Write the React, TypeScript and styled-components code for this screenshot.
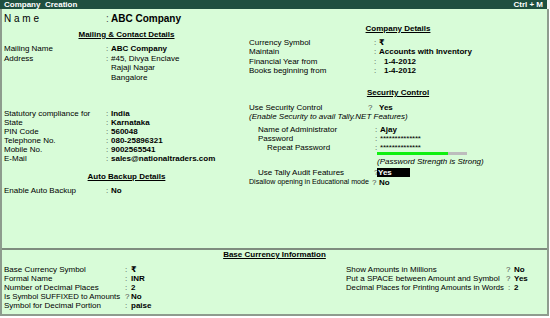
import React from "react";
import styled, {createGlobalStyle} from "styled-components";

const FONT = `"Liberation Sans", Arial, "DejaVu Sans", "Noto Sans", sans-serif`

const GlobalStyle = createGlobalStyle`
  html, body {
    margin: 0;
    padding: 0;
    background: #fff;
  }
  body {
    font-family: ${FONT};
    font-size: 8px;
    color: #000;
  }
`

const Screen = styled.div`
  width: 550px;
  height: 318px;
  overflow: hidden;
  background: #fff;
  display: flex;
  flex-direction: column;
`

const TitleBar = styled.div`
  height: 9px;
  background: #1f5040;
  color: #fff;
  font-weight: bold;
  font-size: 8px;
  line-height: 9px;
  display: flex;
  align-items: center;
  padding-left: 4px;
`

const TitleText = styled.div`
  flex: 1;
  white-space: pre;
`

const Shortcut = styled.div`
  padding-right: 4px;
`

const CornerBox = styled.div`
  width: 3px;
  height: 9px;
  background: #f4f4f4;
`

const Frame = styled.div`
  width: 545px;
  height: 305px;
  background: #d8fcd8;
  border: 2px solid #8e9c8e;
  border-top: none;
  display: flex;
  flex-direction: column;
`

const TopArea = styled.div`
  height: 239px;
  display: grid;
  grid-template-columns: 247px 1fr;
`

const Column = styled.div<{ $pad?: number }>`
  display: flex;
  flex-direction: column;
  padding-left: ${p => p.$pad ?? 0}px;
`

const Block = styled.div<{ $mt?: number; $lh?: number; $indent?: number }>`
  margin-top: ${p => p.$mt ?? 0}px;
  line-height: ${p => p.$lh ?? 9}px;
  padding-left: ${p => p.$indent ?? 0}px;
  white-space: nowrap;
`

const Heading = styled.div<{ $mt?: number }>`
  margin-top: ${p => p.$mt ?? 0}px;
  text-align: center;
  font-weight: bold;
  line-height: 9px;
  white-space: nowrap;

  span {
    text-decoration: underline;
    text-underline-offset: 1px;
  }
`

const Field = styled.div<{ $label: number; $sep: number; $indent?: number; $mt?: number }>`
  display: grid;
  grid-template-columns: ${p => p.$label}px ${p => p.$sep}px auto;
  padding-left: ${p => p.$indent ?? 0}px;
  margin-top: ${p => p.$mt ?? 0}px;
  white-space: nowrap;
`

const Label = styled.div<{ $size?: number }>`
  font-size: ${p => p.$size ?? 8}px;
`

const Sep = styled.div<{ $pad?: number }>`
  color: #4a4a4a;
  padding-left: ${p => p.$pad ?? 0}px;
`

const Value = styled.div<{ $regular?: boolean; $pad?: number }>`
  font-weight: ${p => p.$regular ? 'normal' : 'bold'};
  padding-left: ${p => p.$pad ?? 0}px;
`

const NameRow = styled(Field)`
  font-size: 10px;
  line-height: 12px;
`

const Note = styled.div<{ $indent?: number; $mt?: number }>`
  font-style: italic;
  line-height: 9px;
  margin-top: ${p => p.$mt ?? 0}px;
  padding-left: ${p => p.$indent ?? 0}px;
  white-space: nowrap;
`

const Stars = styled.div`
  font-weight: normal;
  letter-spacing: -0.2px;
`

const StrengthBar = styled.div`
  margin-left: 128px;
  width: 90px;
  height: 3px;
  background: #bdbdbd;
  display: flex;
`

const StrengthFill = styled.div`
  height: 100%;
  background: #10f010;
`

const Cursor = styled.div`
  width: 32px;
  height: 9px;
  background: #000;
  color: #fff;
  font-weight: bold;
  padding-left: 1px;
`

const Divider = styled.div`
  height: 2px;
  background: #7e8c7e;
`

const BottomArea = styled.div`
  display: flex;
  flex-direction: column;
`

const BottomGrid = styled.div`
  margin-top: 6px;
  display: grid;
  grid-template-columns: 342px 1fr;
  padding-left: 2px;
  line-height: 9px;
`

type Pair = [string, React.ReactNode, boolean?]

const contact: Pair[] = [
    ['Statutory compliance for', 'India'],
    ['State', 'Karnataka'],
    ['PIN Code', '560048'],
    ['Telephone No.', '080-25896321'],
    ['Mobile No.', '9002565541'],
    ['E-Mail', 'sales@nationaltraders.com'],
]

const companyDetails: Pair[] = [
    ['Currency Symbol', '₹'],
    ['Maintain', 'Accounts with Inventory'],
    ['Financial Year from', '1-4-2012', true],
    ['Books beginning from', '1-4-2012', true],
]

// label, separator, value, label font size
const baseLeft: [string, string, string, number?][] = [
    ['Base Currency Symbol', ':', '₹'],
    ['Formal Name', ':', 'INR'],
    ['Number of Decimal Places', ':', '2'],
    ['Is Symbol SUFFIXED to Amounts', '?', 'No', 7.8],
    ['Symbol for Decimal Portion', ':', 'paise'],
]

const baseRight: [string, string, string, number?][] = [
    ['Show Amounts in Millions', '?', 'No'],
    ['Put a SPACE between Amount and Symbol', '?', 'Yes'],
    ['Decimal Places for Printing Amounts in Words', ':', '2', 7.75],
]

export default function App() {
    const strength = 79

    return <Screen>
        <GlobalStyle/>
        <TitleBar>
            <TitleText>Company  Creation</TitleText>
            <Shortcut>Ctrl + M</Shortcut>
            <CornerBox/>
        </TitleBar>
        <Frame>
            <TopArea>
                <Column $pad={2}>
                    <NameRow $label={102} $sep={5} $mt={4}>
                        <Label $size={10}>N a m e</Label>
                        <Sep>:</Sep>
                        <Value>ABC Company</Value>
                    </NameRow>
                    <Heading $mt={5}><span>Mailing &amp; Contact Details</span></Heading>
                    <Block $mt={5} $lh={9.5}>
                        <Field $label={102} $sep={5}>
                            <Label>Mailing Name</Label>
                            <Sep>:</Sep>
                            <Value>ABC Company</Value>
                        </Field>
                        <Field $label={102} $sep={5}>
                            <Label>Address</Label>
                            <Sep>:</Sep>
                            <Value $regular>
                                #45, Divya Enclave<br/>Rajaji Nagar<br/>Bangalore
                            </Value>
                        </Field>
                    </Block>
                    <Block $mt={27}>
                        {contact.map(([label, value]) =>
                            <Field key={label} $label={102} $sep={5}>
                                <Label>{label}</Label>
                                <Sep>:</Sep>
                                <Value>{value}</Value>
                            </Field>)}
                    </Block>
                    <Heading $mt={9}><span>Auto Backup Details</span></Heading>
                    <Block $mt={5}>
                        <Field $label={102} $sep={5}>
                            <Label>Enable Auto Backup</Label>
                            <Sep>:</Sep>
                            <Value>No</Value>
                        </Field>
                    </Block>
                </Column>

                <Column>
                    <Heading $mt={14.5}><span>Company Details</span></Heading>
                    <Block $mt={5} $lh={9.5}>
                        {companyDetails.map(([label, value, date]) =>
                            <Field key={label} $label={125} $sep={5}>
                                <Label>{label}</Label>
                                <Sep>:</Sep>
                                <Value $pad={date ? 5 : 0}>{value}</Value>
                            </Field>)}
                    </Block>
                    <Heading $mt={12}><span>Security Control</span></Heading>
                    <Block $mt={6.5}>
                        <Field $label={119} $sep={11}>
                            <Label>Use Security Control</Label>
                            <Sep>?</Sep>
                            <Value>Yes</Value>
                        </Field>
                        <Note>(Enable Security to avail Tally.NET Features)</Note>
                    </Block>
                    <Block $mt={4}>
                        <Field $label={117} $sep={5} $indent={9}>
                            <Label>Name of Administrator</Label>
                            <Sep>:</Sep>
                            <Value>Ajay</Value>
                        </Field>
                        <Field $label={117} $sep={5} $indent={9}>
                            <Label>Password</Label>
                            <Sep>:</Sep>
                            <Stars>**************</Stars>
                        </Field>
                        <Field $label={108} $sep={5} $indent={18}>
                            <Label>Repeat Password</Label>
                            <Sep>:</Sep>
                            <Stars>**************</Stars>
                        </Field>
                    </Block>
                    <StrengthBar>
                        <StrengthFill style={{width: `${strength}%`}}/>
                    </StrengthBar>
                    <Note $indent={128} $mt={1.5}>(Password Strength is Strong)</Note>
                    <Block $mt={2}>
                        <Field $label={116} $sep={3} $indent={9}>
                            <Label>Use Tally Audit Features</Label>
                            <Sep>?</Sep>
                            <Cursor>Yes</Cursor>
                        </Field>
                    </Block>
                    <Block $mt={1}>
                        <Field $label={123} $sep={7}>
                            <Label $size={7.1}>Disallow opening in Educational mode</Label>
                            <Sep>?</Sep>
                            <Value>No</Value>
                        </Field>
                    </Block>
                </Column>
            </TopArea>
            <Divider/>
            <BottomArea>
                <Heading><span>Base Currency Information</span></Heading>
                <BottomGrid>
                    <div>
                        {baseLeft.map(([label, sep, value, size]) =>
                            <Field key={label} $label={121} $sep={6}>
                                <Label $size={size}>{label}</Label>
                                <Sep>{sep}</Sep>
                                <Value>{value}</Value>
                            </Field>)}
                    </div>
                    <div>
                        {baseRight.map(([label, sep, value, size]) =>
                            <Field key={label} $label={160} $sep={8}>
                                <Label $size={size}>{label}</Label>
                                <Sep $pad={sep === ':' ? 2 : 0}>{sep}</Sep>
                                <Value>{value}</Value>
                            </Field>)}
                    </div>
                </BottomGrid>
            </BottomArea>
        </Frame>
    </Screen>
}
